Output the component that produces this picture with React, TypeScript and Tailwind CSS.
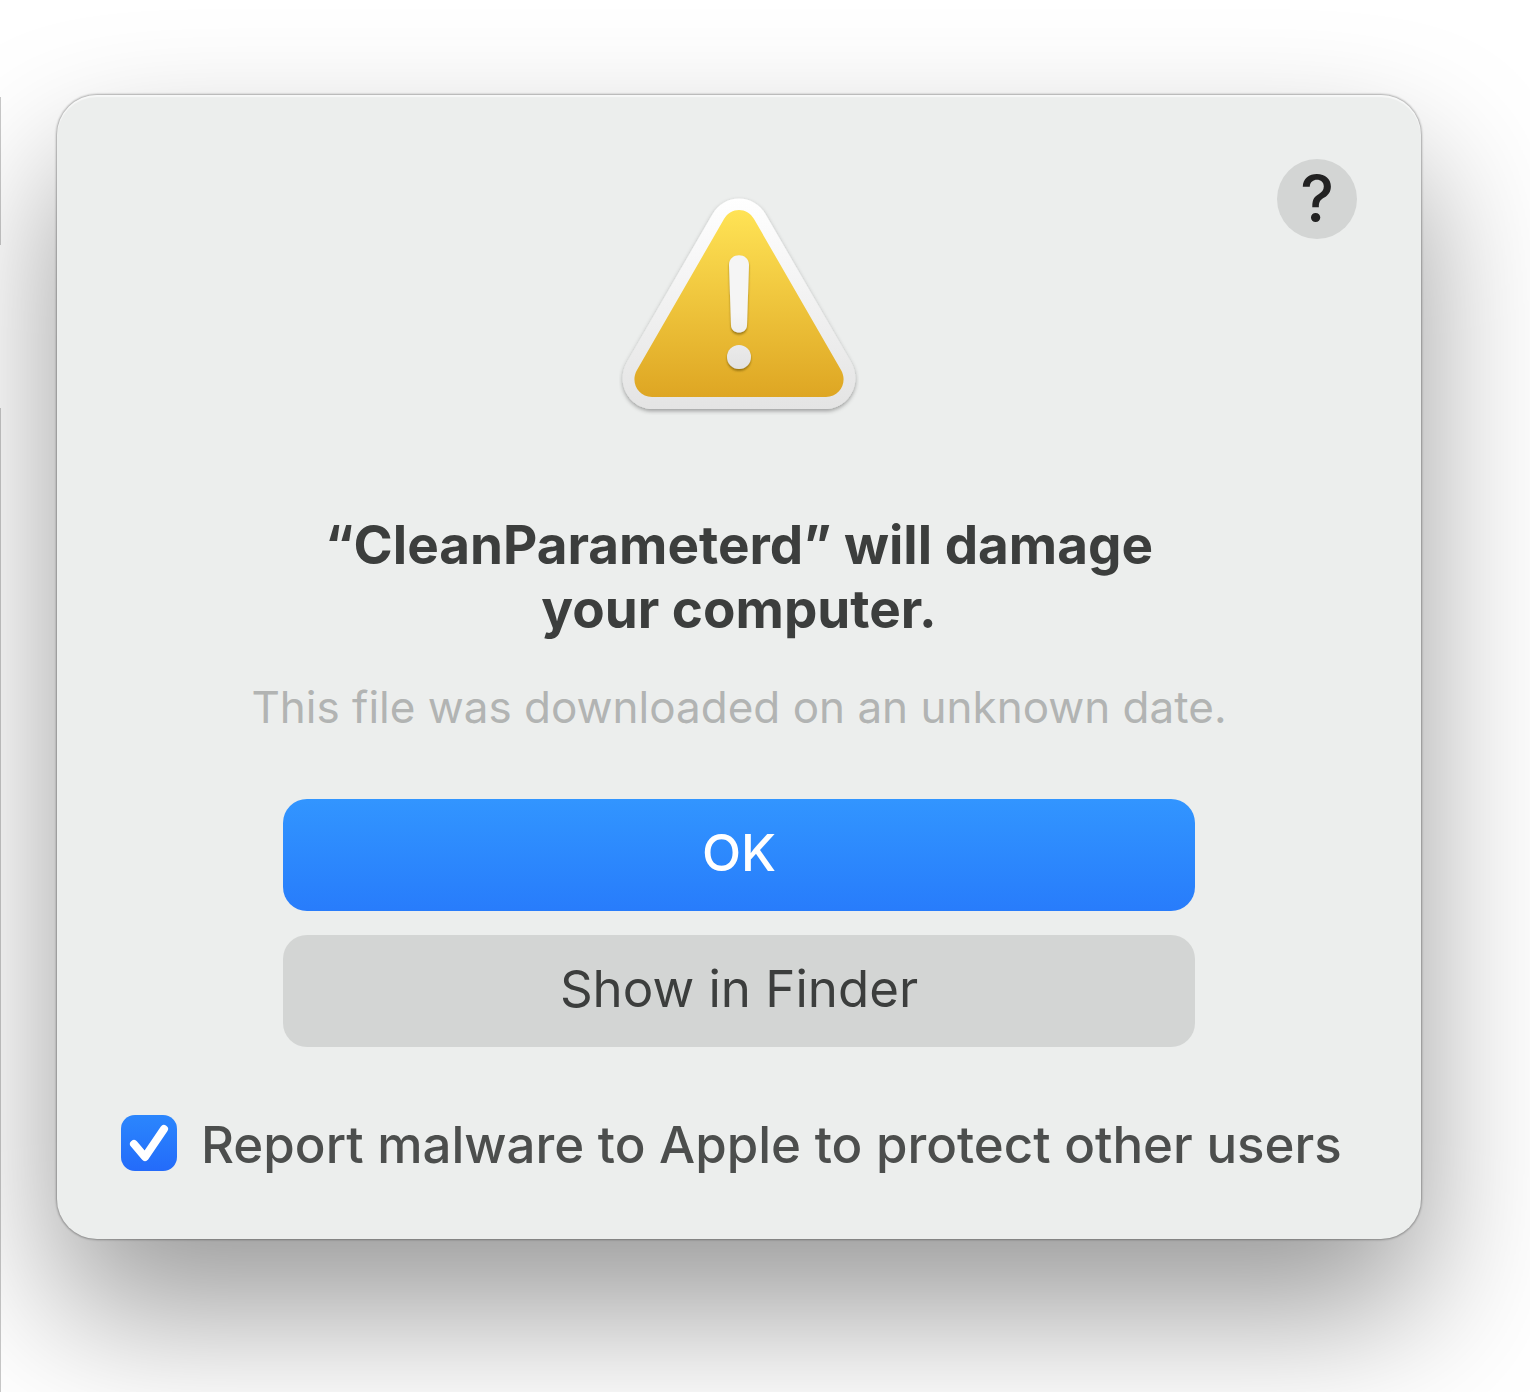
import { useState } from "react"

function WarningIcon() {
  return (
    <svg viewBox="0 0 240 220" className="h-[220px] w-[240px]" aria-hidden="true">
      <defs>
        <linearGradient id="rim" x1="0" y1="0" x2="0" y2="1">
          <stop offset="0" stopColor="#ffffff" />
          <stop offset="1" stopColor="#e4e4e4" />
        </linearGradient>
        <linearGradient id="fill" x1="0" y1="0" x2="0" y2="1">
          <stop offset="0" stopColor="#ffe355" />
          <stop offset="1" stopColor="#dea623" />
        </linearGradient>
        <linearGradient id="mark" gradientUnits="userSpaceOnUse" x1="0" y1="60" x2="0" y2="175">
          <stop offset="0.5" stopColor="#f5f5f5" />
          <stop offset="1" stopColor="#e2e2e2" />
        </linearGradient>
        <filter id="drop" x="-10%" y="-10%" width="120%" height="125%">
          <feDropShadow dx="0" dy="2" stdDeviation="2" floodColor="#000" floodOpacity="0.35" />
        </filter>
        <filter id="markDrop" x="-30%" y="-10%" width="160%" height="125%">
          <feDropShadow dx="0" dy="2" stdDeviation="1" floodColor="#6b5000" floodOpacity="0.6" />
        </filter>
      </defs>
      <path
        d="M93 20C105 -2 135 -2 147 20L232 167C244 188 230 214 206 214H34C10 214 -4 188 8 167Z"
        fill="url(#rim)"
        filter="url(#drop)"
      />
      <path
        d="M105 24C112 12 128 12 135 24L222 175C229 187 221 202 207 202H33C19 202 11 187 18 175Z"
        fill="url(#fill)"
      />
      <g fill="url(#mark)" filter="url(#markDrop)">
        <path d="M110 70C110 57 130 57 130 70L128 130C128 140 112 140 112 130Z" />
        <circle cx="120" cy="162" r="12" />
      </g>
    </svg>
  )
}

export default function App() {
  const [report, setReport] = useState(true)

  return (
    <div className="flex min-h-screen overflow-hidden bg-white font-[Inter,sans-serif] text-[#3c3e3d]">
      {/* Edge of the window behind the dialog */}
      <div className="flex w-px flex-col gap-[163px] pt-[97px]">
        <div className="h-[148px] bg-[#c9c9c9]" />
        <div className="grow bg-[#c9c9c9]" />
      </div>

      <div className="grow pt-[95px] pr-[109px] pb-[152px] pl-[56px]">
        <main className="flex flex-col items-center rounded-[40px] bg-[#eceeed] px-16 py-16 shadow-[inset_0_2px_1px_rgba(255,255,255,0.6),0_0_2px_1px_rgba(0,0,0,0.3),0_72px_144px_rgba(0,0,0,0.4)]">
          <button
            type="button"
            aria-label="Help"
            className="h-20 w-20 self-end rounded-full bg-[#d3d5d4] text-[64px] leading-[80px] font-medium text-[#222]"
          >
            ?
          </button>
          <div className="-mt-[44px]">
            <WarningIcon />
          </div>
          <h1 className="mt-[98px] text-center text-[53px] leading-[64px] font-bold">
            “CleanParameterd” will damage
            <br />
            your computer.
          </h1>
          <p className="mt-[38px] text-[44px] leading-[56px] text-[#b2b4b3]">
            This file was downloaded on an unknown date.
          </p>
          <div className="mt-16 flex w-[912px] flex-col gap-6">
            <button
              type="button"
              className="h-28 rounded-3xl bg-linear-to-b from-[#3295ff] to-[#287cfb] pb-1 text-[51px] font-medium text-white"
            >
              OK
            </button>
            <button type="button" className="h-28 rounded-3xl bg-[#d3d5d4] pb-1 text-[51px]">
              Show in Finder
            </button>
          </div>
          <label className="mt-16 flex items-center gap-6 self-start text-[51px] leading-[60px] font-medium whitespace-nowrap text-[#4c4e4d]">
            <span className="grid h-14 w-14 shrink-0">
              <input
                type="checkbox"
                checked={report}
                onChange={(e) => setReport(e.target.checked)}
                className="peer col-start-1 row-start-1 h-14 w-14 appearance-none rounded-[14px] bg-[#d3d5d4] checked:bg-linear-to-b checked:from-[#2b86fd] checked:to-[#246bfa]"
              />
              <svg
                viewBox="0 0 56 56"
                className="pointer-events-none invisible col-start-1 row-start-1 h-14 w-14 peer-checked:visible"
                fill="none"
                stroke="#fff"
                strokeWidth="8"
                strokeLinecap="round"
                strokeLinejoin="round"
              >
                <path d="M13 29L24 42L43 14" />
              </svg>
            </span>
            <span className="pt-1">Report malware to Apple to protect other users</span>
          </label>
        </main>
      </div>
    </div>
  )
}
